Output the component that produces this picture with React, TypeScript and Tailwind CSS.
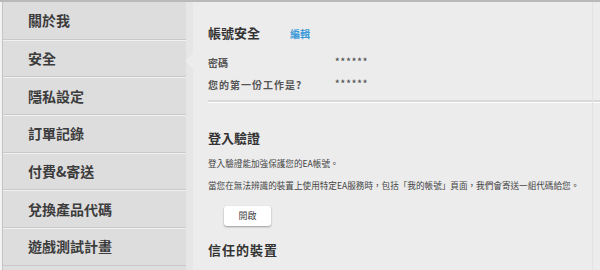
import React from "react";

const items = ["關於我", "安全", "隱私設定", "訂單記錄", "付費&寄送", "兌換產品代碼", "遊戲測試計畫"];

export default function App() {
  const font = { fontFamily: '"Noto Sans CJK TC", "Noto Sans", sans-serif' };
  return (
    <div className="w-[600px] h-[270px] overflow-hidden bg-[#ececec] border-t-2 border-[#b9b9b9]" style={font}>
      <div className="flex h-full">
        <div className="w-[3px] shrink-0 bg-[#f2f2f2] border-r border-[#c4c4c4]" />
        <div className="w-[183px] shrink-0 bg-[#dddddd] flex flex-col relative">
          {items.map((t, i) => (
            <div
              key={t}
              className={`h-[37.67px] shrink-0 flex items-center pl-[25px] text-[14px] font-bold text-[#3c3c3c] border-b border-[#c9c9c9] ${i === 0 ? "" : "border-t border-t-[#f1f1f1]"}`}
            >
              {t}
            </div>
          ))}
          <div className="absolute right-[-8px] top-[50px] w-0 h-0 border-t-[9px] border-b-[9px] border-r-[9px] border-t-transparent border-b-transparent border-r-[#ececec]" />
        </div>
        <div className="w-[7px] shrink-0 bg-[#e6e6e6]" />
        <div className="flex-1 min-w-0 pl-[15px] pt-[21px] flex flex-col relative">
          <div className="absolute right-[7px] top-0 bottom-0 w-px bg-[#e3e3e3]" />
          <div className="flex items-center h-[20px]">
            <span className="text-[13px] font-bold text-[#333] w-[82px]">帳號安全</span>
            <span className="text-[10px] font-bold text-[#3a9ad9]">編輯</span>
          </div>
          <div className="flex items-center h-[14px] mt-[12px] text-[10px] font-bold text-[#555]">
            <span className="w-[127px]">密碼</span>
            <span className="text-[9px] tracking-[1px]">******</span>
          </div>
          <div className="flex items-center h-[14px] mt-[8px] text-[10px] font-bold text-[#555]">
            <span className="w-[127px] tracking-[1px]">您的第一份工作是?</span>
            <span className="text-[9px] tracking-[1px]">******</span>
          </div>
          <div className="mt-[9px] h-[3px] bg-[#d9d9d9] border-b border-white" />
          <div className="mt-[25px] h-[20px] flex items-center text-[13px] font-bold text-[#333]">登入驗證</div>
          <div className="mt-[8px] h-[14px] flex items-center text-[8.6px] text-[#444]">登入驗證能加強保護您的EA帳號。</div>
          <div className="mt-[8px] h-[14px] flex items-center text-[8.6px] text-[#444] whitespace-nowrap">當您在無法辨識的裝置上使用特定EA服務時，包括「我的帳號」頁面，我們會寄送一組代碼給您。</div>
          <div className="mt-[14px] pl-[16px]">
            <button className="w-[47px] h-[20px] bg-white rounded-[3px] shadow-[0_1px_2px_rgba(0,0,0,0.35)] text-[9px] text-[#444] flex items-center justify-center">開啟</button>
          </div>
          <div className="mt-[14px] h-[20px] flex items-center text-[13px] font-bold text-[#333] tracking-[1px]">信任的裝置</div>
        </div>
      </div>
    </div>
  );
}
